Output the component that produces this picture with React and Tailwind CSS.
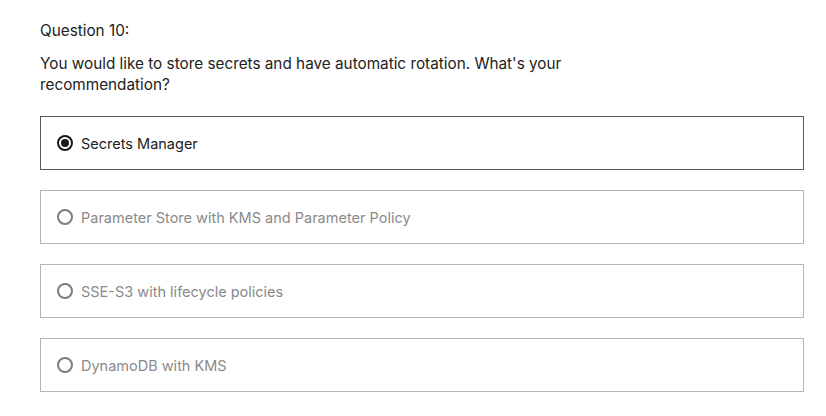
import { useState } from 'react'

const OPTIONS = [
  'Secrets Manager',
  'Parameter Store with KMS and Parameter Policy',
  'SSE-S3 with lifecycle policies',
  'DynamoDB with KMS',
]

function Radio({ checked }) {
  return (
    <span
      className={
        checked
          ? 'flex h-4 w-4 shrink-0 items-center justify-center rounded-full border-2 border-[#1a1a1a]'
          : 'flex h-4 w-4 shrink-0 items-center justify-center rounded-full border-2 border-[#7d7d7d]'
      }
    >
      {checked && <span className="h-2 w-2 rounded-full bg-[#1a1a1a]" />}
    </span>
  )
}

export default function App() {
  const [selected, setSelected] = useState(0)

  return (
    <div className="min-h-screen bg-white px-10 pt-[20px] text-[15.3px] leading-[21px] text-[#222]" style={{ fontFamily: 'Inter, Roboto, "Liberation Sans", sans-serif' }}>
      <p>Question 10:</p>
      <p className="mt-[12px] max-w-[560px]">
        You would like to store secrets and have automatic rotation. What's your recommendation?
      </p>
      <div className="mt-[21px] flex w-[764px] flex-col gap-5 text-[14.5px]">
        {OPTIONS.map((opt, i) => {
          const checked = selected === i
          return (
            <button
              key={opt}
              onClick={() => setSelected(i)}
              className={
                checked
                  ? 'flex h-[54px] items-center gap-[8px] border border-[#5b5b5b] px-[16px] text-left text-[#222]'
                  : 'flex h-[54px] items-center gap-[8px] border border-[#b5b5b5] px-[16px] text-left text-[#8a8a8a]'
              }
            >
              <Radio checked={checked} />
              <span>{opt}</span>
            </button>
          )
        })}
      </div>
    </div>
  )
}
